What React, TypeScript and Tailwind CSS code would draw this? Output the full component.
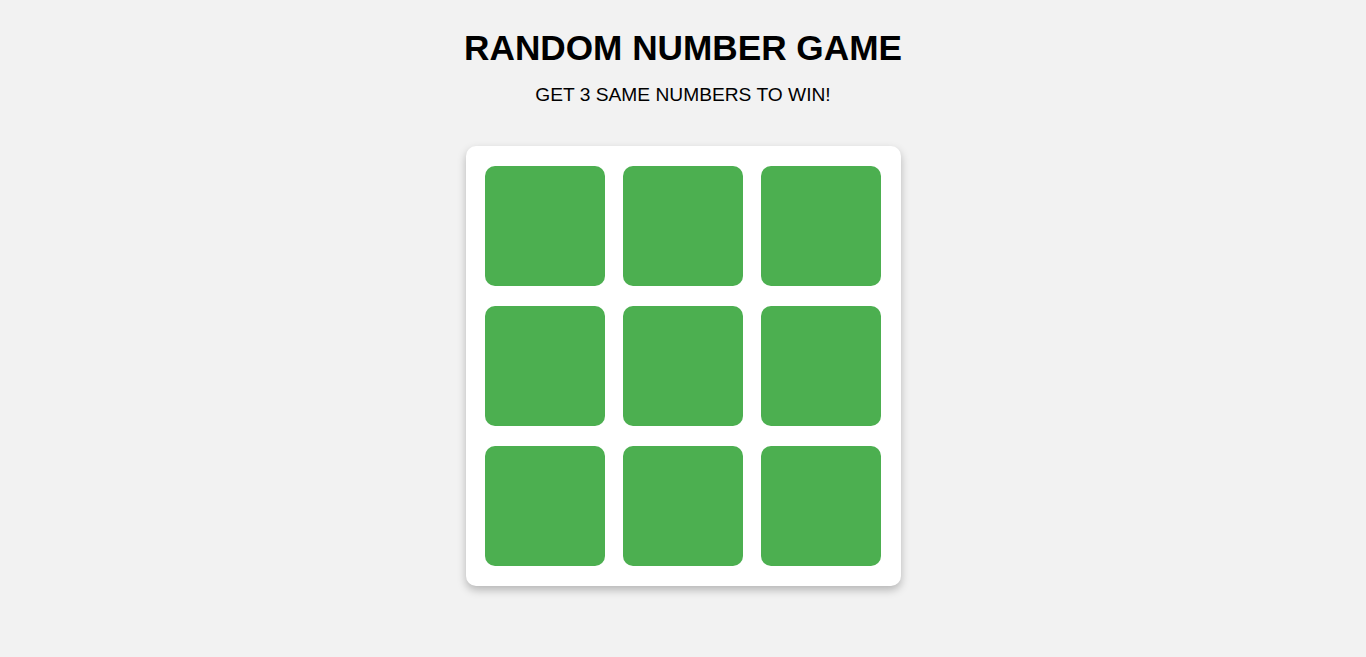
export default function App() {
  const tiles = Array.from({ length: 9 });
  return (
    <div className="min-h-[657px] bg-[#f2f2f2] flex flex-col items-center" style={{ fontFamily: '"Liberation Sans", Arial, sans-serif' }}>
      <h1 className="mt-[27px] text-[35.2px] leading-[42px] font-bold text-black">RANDOM NUMBER GAME</h1>
      <p className="mt-[14px] text-[19.2px] leading-[23px] text-black">GET 3 SAME NUMBERS TO WIN!</p>
      <div className="mt-[40px] bg-white rounded-[10px] shadow-[0_4px_8px_rgba(0,0,0,0.25)] pt-[20px] pb-[20px] pl-[19px] pr-[20px]">
        <div className="grid grid-cols-[120px_120px_120px] gap-x-[18px] gap-y-[20px]">
          {tiles.map((_, i) => (
            <div key={i} className="w-[120px] h-[120px] bg-[#4caf50] rounded-[10px]" />
          ))}
        </div>
      </div>
    </div>
  );
}
